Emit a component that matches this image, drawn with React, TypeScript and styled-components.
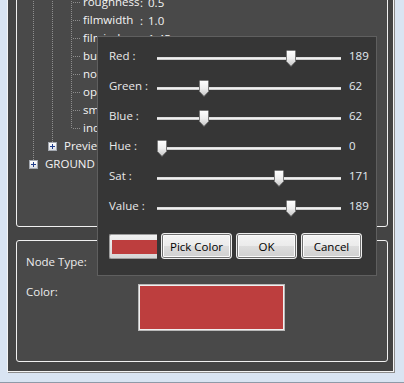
import React from "react";
import styled, { createGlobalStyle } from "styled-components";

const Global = createGlobalStyle`
  html, body { margin: 0; padding: 0; }
  body {
    background: #d9e4f2;
    font-family: "Open Sans", "Noto Sans", sans-serif;
    font-size: 11.5px;
    overflow: hidden;
  }
`;

const Window = styled.div`
  position: relative;
  width: 404px;
  height: 383px;
  box-sizing: border-box;
  background: #d9e4f2;
  border-bottom: 1px solid #8f9aa8;
  padding-left: 7px;
  overflow: hidden;
`;

const Client = styled.div`
  box-sizing: border-box;
  width: 387px;
  height: 402px;
  margin-top: -30px;
  background: #444444;
  border: 1px solid #f4f4f4;
  box-shadow: 1px 1px 0 #8c8c8c;
  padding: 7px 5px 9px 8px;
  display: flex;
  flex-direction: column;
  gap: 13px;
`;

const Panel = styled.div<{ $h: number }>`
  box-sizing: border-box;
  height: ${(p) => p.$h}px;
  background: #494949;
  border: 1px solid #f0f0f0;
  border-radius: 3px;
`;

const TreeList = styled.div`
  padding: 14px 0 0 7px;
  color: #f4f4f4;
`;

const TreeRow = styled.div`
  display: flex;
  align-items: center;
  height: 18px;
  white-space: nowrap;
`;

const Guide = styled.span<{ $v: "none" | "full" | "top"; $h?: boolean }>`
  position: relative;
  flex: none;
  width: 19px;
  height: 18px;
  display: flex;
  align-items: center;
  justify-content: center;
  &::before {
    content: "";
    display: ${(p) => (p.$v === "none" ? "none" : "block")};
    position: absolute;
    left: 9px;
    top: 0;
    width: 1px;
    height: ${(p) => (p.$v === "full" ? "18px" : "9px")};
    background: repeating-linear-gradient(to bottom, #8e8e8e 0 1px, transparent 1px 2px);
  }
  &::after {
    content: "";
    display: ${(p) => (p.$h ? "block" : "none")};
    position: absolute;
    left: 11px;
    top: 9px;
    width: 8px;
    height: 1px;
    background: repeating-linear-gradient(to right, #8e8e8e 0 1px, transparent 1px 2px);
  }
`;

const ExpanderBox = styled.span`
  position: relative;
  z-index: 1;
  box-sizing: border-box;
  width: 9px;
  height: 9px;
  border: 1px solid #a3a8b0;
  background: linear-gradient(#ffffff, #dcdfe4);
  display: flex;
`;

const NodeText = styled.span`
  margin-left: 2px;
  line-height: 18px;
`;

const LeafName = styled.span`
  display: inline-block;
  width: 56px;
  margin-left: 2px;
  line-height: 18px;
`;

const LeafColon = styled.span`
  margin-left: 1px;
`;

const LeafValue = styled.span`
  margin-left: 5px;
`;

const Plus = () => (
  <svg width="7" height="7" viewBox="0 0 7 7">
    <path d="M1 3.5H6M3.5 1V6" stroke="#1f3d8a" strokeWidth="1" />
  </svg>
);

const LowerGrid = styled.div`
  display: grid;
  grid-template-columns: 112px 1fr;
  grid-template-rows: 16px 47px;
  row-gap: 14px;
  padding: 13px 0 0 9px;
  color: #ededed;
`;

const FieldLabel = styled.div<{ $top?: boolean }>`
  line-height: 16px;
  align-self: ${(p) => (p.$top ? "start" : "center")};
`;

const BigSwatch = styled.div<{ $c: string }>`
  box-sizing: border-box;
  width: 147px;
  height: 47px;
  background: ${(p) => p.$c};
  border: 1px solid #b9b9b9;
  box-shadow: inset 0 0 0 1px #f0f0f0;
`;

/* ---------- dialog ---------- */

const Dialog = styled.div`
  position: absolute;
  left: 97px;
  top: 36px;
  box-sizing: border-box;
  width: 280px;
  height: 240px;
  background: #363636;
  border: 1px solid #5f5f5f;
  padding: 4px 0 0 11px;
  color: #e9e9e9;
`;

const SliderRow = styled.div`
  display: grid;
  grid-template-columns: 48px 184px auto;
  align-items: center;
  height: 30px;
`;

const SliderLabel = styled.span`
  line-height: 16px;
`;

const SliderArea = styled.div`
  position: relative;
  height: 30px;
`;

const Track = styled.div`
  position: absolute;
  left: 0;
  right: 0;
  top: 16px;
  height: 3px;
  background: linear-gradient(#cfcfcf, #f6f6f6 45%, #b9b9b9);
`;

const ThumbWrap = styled.div`
  position: absolute;
  top: 9px;
  width: 10px;
  height: 17px;
`;

const SliderValue = styled.span`
  margin-left: 8px;
  color: #e3ebf2;
  line-height: 16px;
`;

const ButtonRow = styled.div`
  display: flex;
  align-items: flex-end;
  gap: 4px;
  margin-top: 12px;
`;

const Swatch = styled.div`
  box-sizing: border-box;
  width: 48px;
  height: 25px;
  display: flex;
  padding: 5px 0 4px 2px;
  border: 1px solid #9d9d9d;
  border-right: none;
  border-radius: 2px 0 0 2px;
  background: linear-gradient(#f2f2f2, #d6d6d6);
`;

const SwatchFill = styled.div<{ $c: string }>`
  flex: 1;
  background: ${(p) => p.$c};
`;

const Button = styled.button<{ $w: number }>`
  box-sizing: border-box;
  width: ${(p) => p.$w}px;
  height: 26px;
  padding: 0;
  border: 1px solid #eeeeee;
  border-radius: 3px;
  box-shadow: inset 0 0 0 1px #707070, inset 0 0 0 2px #fbfbfb;
  background: linear-gradient(#f4f4f4 0%, #ebebeb 50%, #dddddd 51%, #cfcfcf 100%);
  font-family: "Open Sans", "Noto Sans", sans-serif;
  font-size: 11.5px;
  color: #000;
`;

const Thumb = () => (
  <svg width="10" height="17" viewBox="0 0 10 17">
    <defs>
      <linearGradient id="tg" x1="0" y1="0" x2="0" y2="1">
        <stop offset="0" stopColor="#ffffff" />
        <stop offset="0.5" stopColor="#eeeeee" />
        <stop offset="1" stopColor="#c4c4c4" />
      </linearGradient>
    </defs>
    <path
      d="M1.5 0.5H8.5Q9.5 0.5 9.5 1.5V11.5L5 16.3L0.5 11.5V1.5Q0.5 0.5 1.5 0.5Z"
      fill="url(#tg)"
      stroke="#7a7a7a"
      strokeWidth="1"
    />
  </svg>
);

type Line = "none" | "full" | "top";
type TreeItem = {
  guides: { v: Line; h?: boolean; box?: boolean }[];
  name: string;
  value?: string;
};

const full = { v: "full" as Line };
const tree: TreeItem[] = [
  { guides: [full, full, { v: "full", h: true }], name: "roughness", value: "0.5" },
  { guides: [full, full, { v: "full", h: true }], name: "filmwidth", value: "1.0" },
  { guides: [full, full, { v: "full", h: true }], name: "filmindex", value: "1.45" },
  { guides: [full, full, { v: "full", h: true }], name: "bumpmap", value: "0" },
  { guides: [full, full, { v: "full", h: true }], name: "normalmap", value: "0" },
  { guides: [full, full, { v: "full", h: true }], name: "opacity", value: "1.0" },
  { guides: [full, full, { v: "full", h: true }], name: "smooth", value: "1" },
  { guides: [full, full, { v: "top", h: true }], name: "index", value: "0" },
  { guides: [full, { v: "top", box: true }], name: "Preview" },
  { guides: [{ v: "top", box: true }], name: "GROUND" },
];

const sliders = [
  { label: "Red :", value: 189 },
  { label: "Green :", value: 62 },
  { label: "Blue :", value: 62 },
  { label: "Hue :", value: 0 },
  { label: "Sat :", value: 171 },
  { label: "Value :", value: 189 },
];

const RED = "#bd3e3e";

export default function App() {
  return (
    <Window>
      <Global />
      <Client>
        <Panel $h={249}>
          <TreeList>
            {tree.map((item, i) => (
              <TreeRow key={i}>
                {item.guides.map((g, j) => (
                  <Guide key={j} $v={g.v} $h={g.h}>
                    {g.box && (
                      <ExpanderBox>
                        <Plus />
                      </ExpanderBox>
                    )}
                  </Guide>
                ))}
                {item.value !== undefined ? (
                  <>
                    <LeafName>{item.name}</LeafName>
                    <LeafColon>:</LeafColon>
                    <LeafValue>{item.value}</LeafValue>
                  </>
                ) : (
                  <NodeText>{item.name}</NodeText>
                )}
              </TreeRow>
            ))}
          </TreeList>
        </Panel>
        <Panel $h={122}>
          <LowerGrid>
            <FieldLabel>Node Type:</FieldLabel>
            <div />
            <FieldLabel $top>Color:</FieldLabel>
            <BigSwatch $c={RED} />
          </LowerGrid>
        </Panel>
      </Client>

      <Dialog>
        {sliders.map((s) => (
          <SliderRow key={s.label}>
            <SliderLabel>{s.label}</SliderLabel>
            <SliderArea>
              <Track />
              <ThumbWrap style={{ left: `${(s.value / 255) * 174}px` }}>
                <Thumb />
              </ThumbWrap>
            </SliderArea>
            <SliderValue>{s.value}</SliderValue>
          </SliderRow>
        ))}
        <ButtonRow>
          <Swatch>
            <SwatchFill $c={RED} />
          </Swatch>
          <Button $w={71}>Pick Color</Button>
          <Button $w={61}>OK</Button>
          <Button $w={61}>Cancel</Button>
        </ButtonRow>
      </Dialog>
    </Window>
  );
}
